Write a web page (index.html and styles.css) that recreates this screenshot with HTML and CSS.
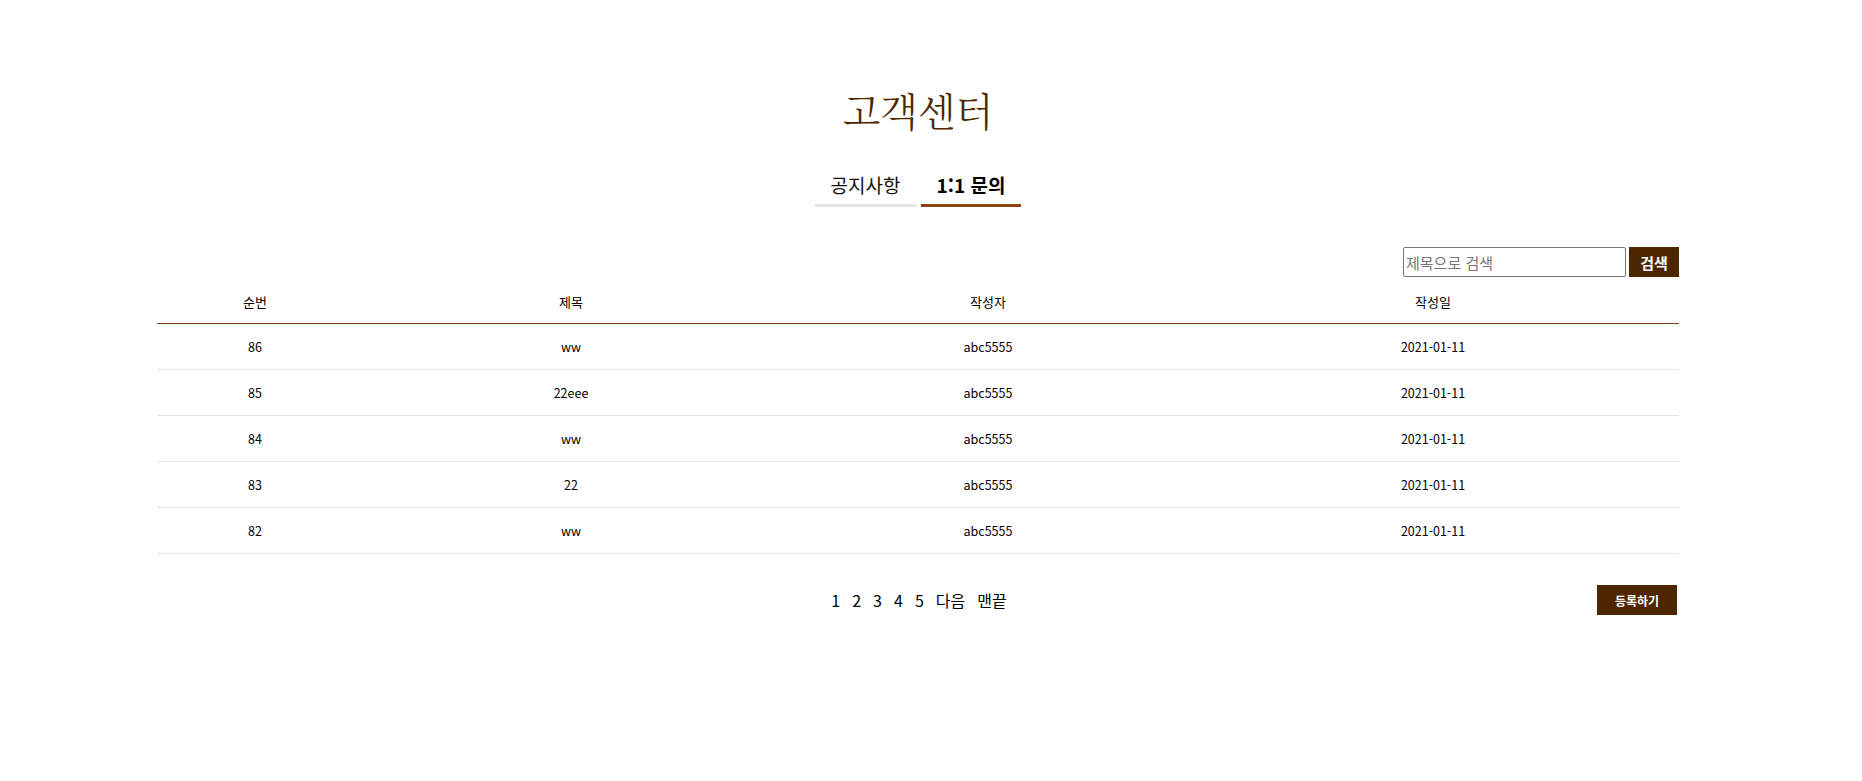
FILE: index.html
```html
<!DOCTYPE html>
<html lang="ko">
<head>
<meta charset="utf-8">
<title>고객센터</title>
<link rel="stylesheet" href="styles.css">
</head>
<body>
<div class="page">
  <h1 class="title">고객센터</h1>
  <div class="tabs">
    <a class="tab" href="#">공지사항</a>
    <a class="tab active" href="#">1:1 문의</a>
  </div>
  <div class="board">
    <form class="search">
      <input class="search-input" type="text" placeholder="제목으로 검색">
      <button class="search-btn" type="button">검색</button>
    </form>
    <table class="list">
      <colgroup>
        <col class="c1"><col class="c2"><col class="c3"><col class="c4">
      </colgroup>
      <thead>
        <tr><th>순번</th><th>제목</th><th>작성자</th><th>작성일</th></tr>
      </thead>
      <tbody>
        <tr><td>86</td><td>ww</td><td>abc5555</td><td>2021-01-11</td></tr>
        <tr><td>85</td><td>22eee</td><td>abc5555</td><td>2021-01-11</td></tr>
        <tr><td>84</td><td>ww</td><td>abc5555</td><td>2021-01-11</td></tr>
        <tr><td>83</td><td>22</td><td>abc5555</td><td>2021-01-11</td></tr>
        <tr><td>82</td><td>ww</td><td>abc5555</td><td>2021-01-11</td></tr>
      </tbody>
    </table>
    <div class="bottom">
      <div class="pager">
        <a href="#">1</a><a href="#">2</a><a href="#">3</a><a href="#">4</a><a href="#">5</a><a href="#">다음</a><a href="#">맨끝</a>
      </div>
      <button class="write-btn" type="button">등록하기</button>
    </div>
  </div>
</div>
</body>
</html>
```
FILE: styles.css
```css
html, body {
  margin: 0;
  padding: 0;
  background: #fff;
}
body {
  font-family: "Noto Sans CJK KR", "Noto Sans", sans-serif;
  color: #000;
}
.page {
  width: 1836px;
  display: flex;
  flex-direction: column;
  align-items: center;
}
.title {
  margin: 84px 0 0;
  font-family: "Noto Serif CJK KR", "Noto Sans CJK KR", serif;
  font-weight: 300;
  font-size: 39px;
  line-height: 50px;
  color: #4d2600;
}
.tabs {
  margin-top: 39px;
  display: flex;
  gap: 4px;
}
.tab {
  display: block;
  font-size: 19px;
  line-height: 24px;
  padding: 0 16px 7px;
  color: #111;
  text-decoration: none;
  border-bottom: 3px solid #e3e3e3;
}
.tab.active {
  font-weight: 700;
  color: #000;
  padding: 0 16px 7px;
  border-bottom-color: #8b4513;
}
.board {
  width: 1522px;
  margin-top: 40px;
}
.search {
  display: flex;
  justify-content: flex-end;
  gap: 3px;
  height: 30px;
  margin: 0;
}
.search-input {
  box-sizing: border-box;
  width: 223px;
  height: 30px;
  margin: 0;
  padding: 0 2px;
  border: 1px solid #767676;
  border-radius: 2px;
  font-family: "Noto Sans CJK KR", sans-serif;
  font-size: 15px;
  color: #333;
}
.search-input::placeholder {
  color: #757575;
}
.search-btn {
  width: 50px;
  height: 30px;
  border: 0;
  margin: 0;
  padding: 0;
  background: #4d2600;
  color: #fff;
  font-family: "Noto Sans CJK KR", sans-serif;
  font-size: 15px;
  font-weight: 700;
}
.list {
  width: 100%;
  margin-top: 2px;
  border-collapse: separate;
  border-spacing: 0;
  table-layout: fixed;
}
.c1 { width: 196px; }
.c2 { width: 436px; }
.c3 { width: 398px; }
.c4 { width: 492px; }
.list th {
  height: 45px;
  padding: 0;
  font-size: 13px;
  font-weight: 400;
  border-bottom: 1px solid #7a4519;
  box-sizing: border-box;
}
.list td {
  height: 46px;
  padding: 0;
  font-size: 12.5px;
  text-align: center;
  border-bottom: 1px solid #e5e5e5;
  box-sizing: border-box;
}
.bottom {
  position: relative;
  margin-top: 31px;
  height: 30px;
  display: flex;
  justify-content: center;
  align-items: center;
}
.pager {
  display: flex;
  gap: 12px;
  font-size: 16px;
  margin-left: 2px;
}
.pager a {
  color: #000;
  text-decoration: none;
}
.write-btn {
  position: absolute;
  right: 2px;
  top: 0;
  width: 80px;
  height: 30px;
  border: 0;
  padding: 0;
  background: #4d2600;
  color: #fff;
  font-family: "Noto Sans CJK KR", sans-serif;
  font-size: 12px;
  font-weight: 700;
}
```
